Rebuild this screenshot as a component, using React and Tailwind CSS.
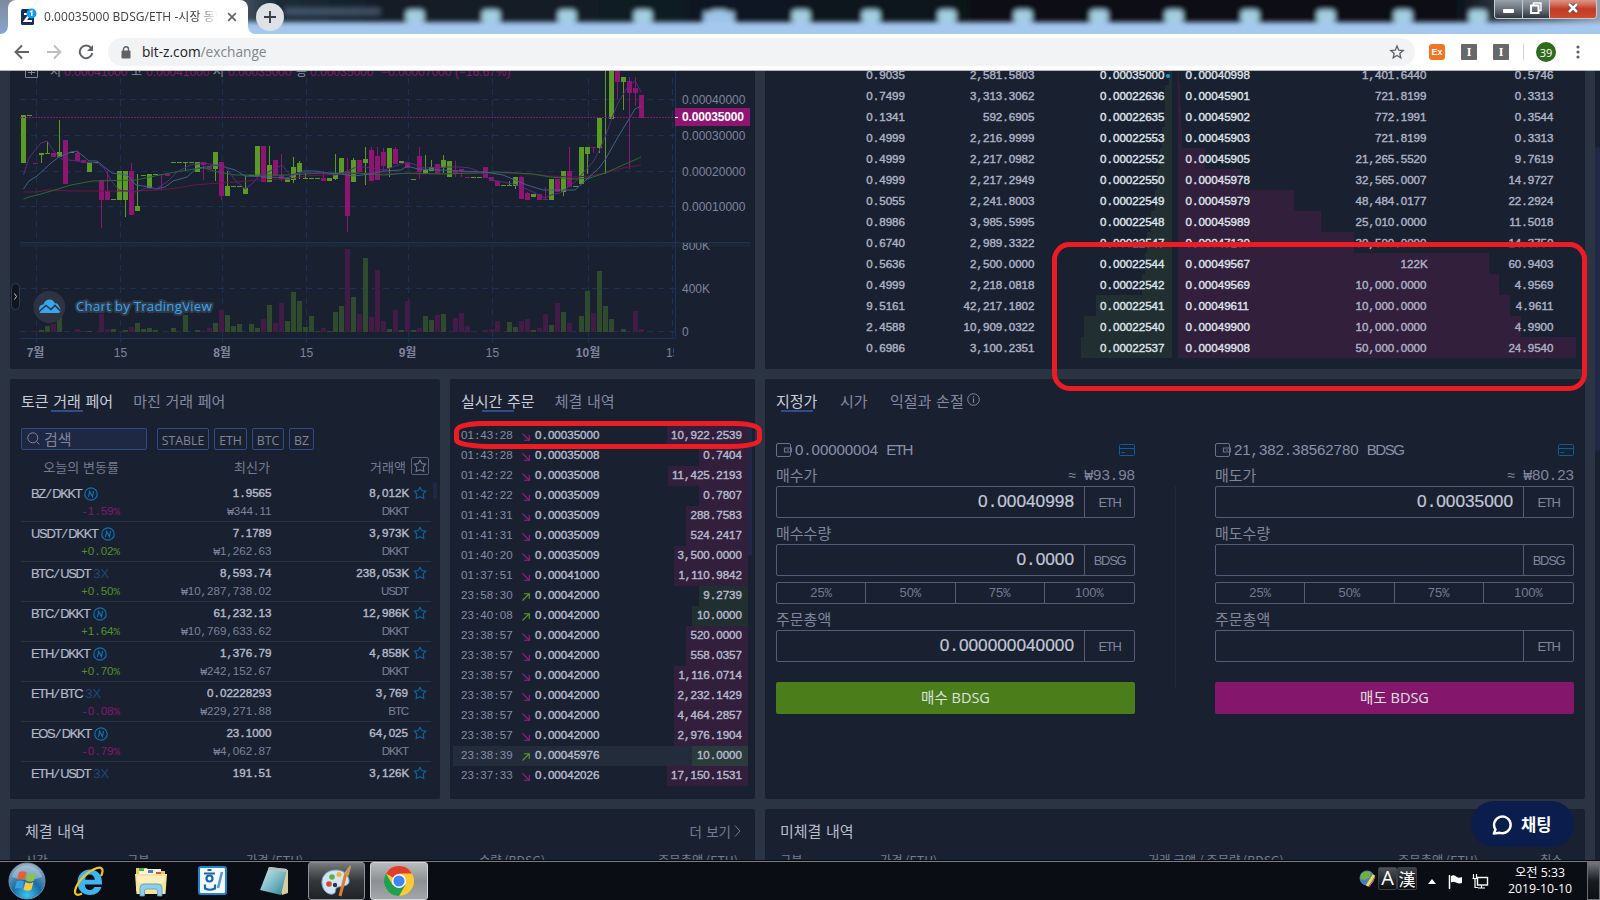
import React from "react";

/* ---------- data ---------- */

// [direction, body top, body bottom, wick top, wick bottom]
const candles = [
  ["g",115,163],["g",115,116],["p",163,164],["g",153,155,153,163],["g",153,154,141,154],["p",153,157],["g",152,157,120,157],["p",140,184],
  ["g",152,153],["p",153,161,151,161],["p",160,163],["g",162,172],["g",162,163],["p",180,200,180,228],["p",191,200,171,200],["g",199,200],
  ["g",171,200],["g",171,200,171,217],["p",171,215,163,215],["g",206,211,174,211],["g",175,176],["g",174,188,174,189],["g",174,175],["p",174,175,174,190],
  ["p",174,176],["g",162,163],["g",162,163],["g",162,163,162,171],["g",162,163],["g",162,172],["p",162,165,162,180],["p",167,169],
  ["g",152,169,152,181],["p",162,196,162,200],["g",186,196,171,196],["g",186,187],["g",186,187],["g",188,194,176,194],["g",175,176],["g",146,176],
  ["p",146,182],["g",165,182,146,182],["p",160,176],["p",175,179,154,181],["g",178,182],["g",167,180,157,183],["g",163,172,161,179],["g",178,179,173,179],
  ["g",178,179],["g",178,179],["p",178,181,171,181],["g",178,181],["g",173,179,154,180],["g",158,174],["p",171,216,158,232],["g",160,182,158,182],
  ["p",160,172],["g",159,163,147,185],["p",150,181,147,181],["p",156,180,147,180],["p",152,166,148,171],["g",148,168,148,177],["p",149,164,147,164],["g",161,163],
  ["p",163,168],["g",179,180],["p",156,172,147,179],["g",170,174,155,174],["g",167,171,160,171],["p",164,174],["g",160,168,155,174],["g",161,177],
  ["p",170,173,161,177],["p",169,172,169,177],["p",177,178],["g",177,178],["g",177,178],["p",167,178],["p",177,181],["p",181,186],
  ["g",185,186],["g",185,186,181,186],["g",177,186,177,189],["p",177,199,176,199],["p",193,200,192,200],["g",194,197],["p",194,200],["p",199,200,187,200],
  ["g",179,200],["p",179,192],["g",171,192,171,196],["p",171,187,147,187],["g",186,187],["g",147,184],["g",147,154,147,174],["p",147,148,147,153],
  ["g",118,148,118,153],["g",40,60,40,174],["g",60,119],["p",60,82,60,99],["g",77,82,77,110],["p",81,93,77,169],["p",88,93,77,106],["p",95,118],
];

const volumes = {
  2:1,3:2,4:6,5:8,6:15,9:3,10:1,11:1,13:18,14:3,15:3,17:2,18:5,19:9,20:3,21:4,22:2,25:4,27:17,29:2,30:1,31:4,32:9,33:22,34:17,35:6,36:8,
  38:8,39:4,40:13,41:27,42:9,43:29,44:11,45:40,46:31,47:5,48:16,49:1,50:4,51:1,52:20,53:26,54:83,55:35,56:18,57:74,58:15,59:62,60:11,61:3,
  62:22,63:2,64:31,65:2,66:4,67:16,68:12,69:17,70:18,72:14,73:19,74:6,77:2,78:3,79:11,81:10,82:5,83:11,84:13,85:2,86:4,87:18,88:7,89:29,
  90:20,91:9,93:16,94:41,95:19,96:61,97:26,98:13,99:1,100:3,102:21,103:3,
};

const averages = [
  ["#6b1748", "23.5,192 37,192 47,190 71,191 132,191 160,190 177,188 194,185 218,183 235,182 257,180 289,179 306,176 340,174 381,173 421,174 470,173 503,173 530,174 550,176 575,177 590,176 605,173 623,168 641,165"],
  ["#2b6a36", "23.5,199 29,197 41,194 58,189 71,185 92,181 136,180 150,177 170,173 194,169 204,168 218,172 235,175 289,175 323,173 357,173 384,175 408,173 442,174 476,173 497,172 517,173 533,174 550,177 575,179 590,178 605,173 623,165 637,159 641,157"],
  ["#3f618a", "23.5,189 29,181 37,176 51,163 59,157 71,152 77,151 89,161 97,161 112,173 127,175 136,185 150,187 156,189 165,187 173,181 187,177 197,168 206,167 218,165 235,170 245,176 268,177 287,178 303,171 316,171 326,173 340,174 354,176 370,174 384,171 401,170 407,166 418,169 442,170 459,171 485,172 503,175 515,180 527,185 543,190 560,190 575,190 587,179 599,168 605,160 618,137 629,119 635,109 641,106"],
  ["#582b80", "23.5,175 29,158 41,143 47,141 53,150 61,159 85,162 97,163 104,168 112,182 119,190 137,192 146,188 156,189 167,182 177,172 190,165 204,163 215,165 226,167 235,180 245,189 253,183 258,177 268,172 282,165 290,175 299,173 313,172 323,173 335,175 343,173 354,168 365,167 384,170 407,162 425,168 449,167 461,167 470,168 480,172 491,180 503,182 513,184 520,186 533,192 545,198 551,195 560,193 575,182 583,173 593,162 600,149 605,137 612,118 618,103 629,85 635,81 641,92"],
];

const book = [
  ["0.9035","2,581.5803","0.00035000",1169,"0.00040998","1,401.6440","0.5746",1179],
  ["0.7499","3,313.3062","0.00022636",1165,"0.00045901","721.8199","0.3313",1180],
  ["0.1341","592.6905","0.00022635",1165,"0.00045902","772.1991","0.3544",1181],
  ["0.4999","2,216.9999","0.00022553",1162,"0.00045903","721.8199","0.3313",1182],
  ["0.4999","2,217.0982","0.00022552",1160,"0.00045905","21,265.5520","9.7619",1205],
  ["0.4999","2,217.2949","0.00022550",1157,"0.00045978","32,565.0007","14.9727",1241],
  ["0.5055","2,241.8003","0.00022549",1155,"0.00045979","48,484.0177","22.2924",1294],
  ["0.8986","3,985.5995","0.00022548",1151,"0.00045989","25,010.0000","11.5018",1321],
  ["0.6740","2,989.3322","0.00022547",1147,"0.00047130","30,500.0000","14.3750",1354],
  ["0.5636","2,500.0000","0.00022544",1145,"0.00049567","122K","60.9403",1489],
  ["0.4999","2,218.0818","0.00022542",1142,"0.00049569","10,000.0000","4.9569",1499],
  ["9.5161","42,217.1802","0.00022541",1096,"0.00049611","10,000.0000","4.9611",1510],
  ["2.4588","10,909.0322","0.00022540",1084,"0.00049900","10,000.0000","4.9900",1521],
  ["0.6986","3,100.2351","0.00022537",1081,"0.00049908","50,000.0000","24.9540",1576],
];

const pairs = [
  ["BZ/DKKT","N","-1.59%","1.9565","₩344.11","8,012K","DKKT"],
  ["USDT/DKKT","N","+0.02%","7.1789","₩1,262.63","3,973K","DKKT"],
  ["BTC/USDT","3X","+0.50%","8,593.74","₩10,287,738.02","238,053K","USDT"],
  ["BTC/DKKT","N","+1.64%","61,232.13","₩10,769,633.62","12,986K","DKKT"],
  ["ETH/DKKT","N","+0.70%","1,376.79","₩242,152.67","4,858K","DKKT"],
  ["ETH/BTC","3X","-0.08%","0.02228293","₩229,271.88","3,769","BTC"],
  ["EOS/DKKT","N","-0.79%","23.1000","₩4,062.87","64,025","DKKT"],
  ["ETH/USDT","3X","","191.51","","3,126K",""],
];

const trades = [
  ["01:43:28",0,"0.00035000","10,922.2539"],
  ["01:43:28",0,"0.00035008","0.7404"],
  ["01:42:22",0,"0.00035008","11,425.2193"],
  ["01:42:22",0,"0.00035009","0.7807"],
  ["01:41:31",0,"0.00035009","288.7583"],
  ["01:41:31",0,"0.00035009","524.2417"],
  ["01:40:20",0,"0.00035009","3,500.0000"],
  ["01:37:51",0,"0.00041000","1,110.9842"],
  ["23:58:30",1,"0.00042000","9.2739"],
  ["23:40:08",1,"0.00042000","10.0000"],
  ["23:38:57",0,"0.00042000","520.0000"],
  ["23:38:57",0,"0.00042000","558.0357"],
  ["23:38:57",0,"0.00042000","1,116.0714"],
  ["23:38:57",0,"0.00042000","2,232.1429"],
  ["23:38:57",0,"0.00042000","4,464.2857"],
  ["23:38:57",0,"0.00042000","2,976.1904"],
  ["23:38:39",1,"0.00045976","10.0000"],
  ["23:37:33",0,"0.00042026","17,150.1531"],
];

const MONO = "font-['Liberation_Mono','Noto_Sans_CJK_KR',monospace]";
const UI = "font-['Noto_Sans_CJK_KR',sans-serif]";
const NUM = "font-['Liberation_Mono','Noto_Sans_CJK_KR',monospace] text-[10.75px] [-webkit-text-stroke:0.4px_currentColor]";

// Digits and capitals in the sans face, sized and tracked so that each fills one monospace cell.
function Fig({ children }) {
  return String(children).split(/(\d+|[A-Z]+)/).map((part, i) => {
    if (i % 2 === 0) return part;
    return /\d/.test(part)
      ? <span key={i} className="font-['Liberation_Sans',sans-serif] text-[1.079em]">{part}</span>
      : <span key={i} className="font-['Liberation_Sans',sans-serif] text-[1.079em] tracking-[-0.1em]">{part}</span>;
  });
}

/* ---------- browser chrome ---------- */

function TabStrip() {
  const glows = [415, 491, 567, 643, 719, 801, 871, 947, 1023, 1099, 1174, 1250, 1326, 1403, 1478];
  return (
    <div className="relative flex h-[34px] w-full shrink-0 overflow-hidden bg-[#a5c8ef]">
      <svg className="absolute inset-0" width="1600" height="34">
        <defs>
          <filter id="soft" x="-20%" y="-40%" width="140%" height="200%"><feGaussianBlur stdDeviation="2.6" /></filter>
          <linearGradient id="glass" x1="0" x2="1" y1="0" y2="0">
            <stop offset="0" stopColor="#8295a6" /><stop offset="0.15" stopColor="#566473" /><stop offset="0.18" stopColor="#1f2c39" /><stop offset="0.25" stopColor="#131c26" />
            <stop offset="0.42" stopColor="#111a24" /><stop offset="0.7" stopColor="#080d13" /><stop offset="0.9" stopColor="#0b1118" />
            <stop offset="0.96" stopColor="#5c6672" /><stop offset="1" stopColor="#a7b6c8" />
          </linearGradient>
          <linearGradient id="edge" x1="0" x2="0" y1="0" y2="1"><stop offset="0" stopColor="#7e8a9a" /><stop offset="1" stopColor="#87a5d0" /></linearGradient>
        </defs>
        <g filter="url(#soft)">
          <rect x="-20" y="-20" width="1640" height="42" fill="url(#glass)" />
          {glows.map((x) => <rect key={x} x={x - 9} y="10" width="18" height="12" rx="4" fill="#a3cfe0" />)}
          <rect x="285" y="8" width="95" height="7" fill="#5a7188" opacity="0.6" />
          <rect x="704" y="12" width="30" height="10" fill="#9cc3e8" />
        </g>
        <rect width="9" height="34" fill="url(#edge)" />
        <path d="M0 34C5 34 8 31 8 25V34ZM256 34C251 34 248 31 248 25V34Z" fill="#fff" />
      </svg>
      <div className="relative ml-2 flex h-full w-[240px] items-center rounded-t-lg bg-white pl-[13px]">
        <svg width="16" height="18" viewBox="0 0 16 18">
          <rect y="1" width="13" height="16" rx="1.5" fill="#1a2c5b" />
          <path d="M3 6H9L4 13H11" fill="none" stroke="#fff" strokeWidth="2.2" />
          <circle cx="10.5" cy="5.5" r="5" fill="#129bf0" />
          <path d="M9 4L10.8 3V8" fill="none" stroke="#fff" strokeWidth="1.4" />
        </svg>
        <div className="ml-[7px] w-[174px] overflow-hidden whitespace-pre font-['Open_Sans','Noto_Sans_CJK_KR',sans-serif] text-[12px] leading-[20px] tracking-[0.05px] text-[#3c4043] [mask-image:linear-gradient(to_right,#000_88%,transparent)]">0.00035000 BDSG/ETH -시장 동향</div>
        <svg className="ml-[9px]" width="10" height="10" viewBox="0 0 10 10"><path d="M1.2 1.2L8.8 8.8M8.8 1.2L1.2 8.8" stroke="#5f6368" strokeWidth="1.7" /></svg>
      </div>
      <div className="relative ml-2 mt-[3px] flex size-7 items-center justify-center rounded-full bg-[#dee1e6]">
        <svg width="12" height="12" viewBox="0 0 12 12"><path d="M6 0V12M0 6H12" stroke="#3c4043" strokeWidth="1.9" /></svg>
      </div>
      <div className="absolute right-[3px] top-0 flex h-[19px] overflow-hidden rounded-b-[4px] border border-t-0 border-[#c5ccd4]">
        <div className="flex w-[28px] items-end justify-center border-r border-[#c5ccd4] bg-linear-to-b from-[#98a0aa] via-[#6a727c] via-50% to-[#2f363e] pb-[5px]"><span className="h-[4px] w-[11px] rounded-[1px] bg-white" /></div>
        <div className="flex w-[27px] items-center justify-center border-r border-[#c5ccd4] bg-linear-to-b from-[#98a0aa] via-[#6a727c] via-50% to-[#2f363e]">
          <svg className="mb-[2px]" width="12" height="12" viewBox="0 0 12 12"><path d="M3.5 3V1H11V8.5H9" fill="none" stroke="#fff" strokeWidth="1.4" /><rect x="1" y="3.5" width="7.5" height="7.5" fill="none" stroke="#fff" strokeWidth="2" /></svg>
        </div>
        <div className="flex w-[46px] items-center justify-center bg-linear-to-b from-[#dd9688] via-[#c03a26] via-50% to-[#d04a2c]">
          <svg className="mb-[2px]" width="12" height="10" viewBox="0 0 12 10"><path d="M2 1L10 9M10 1L2 9" stroke="#4a3a40" strokeWidth="4" /><path d="M2 1L10 9M10 1L2 9" stroke="#fff" strokeWidth="2.6" /></svg>
        </div>
      </div>
    </div>
  );
}

function Toolbar() {
  return (
    <div className="flex h-[37px] shrink-0 items-center border-b border-[#b4b7b8] bg-white">
      <svg className="ml-[14px]" width="16" height="16" viewBox="0 0 16 16"><path d="M15 8H2M8 1.5L1.5 8L8 14.5" fill="none" stroke="#5f6368" strokeWidth="1.9" /></svg>
      <svg className="ml-[16px]" width="16" height="16" viewBox="0 0 16 16"><path d="M1 8H14M8 1.5L14.5 8L8 14.5" fill="none" stroke="#bcbec1" strokeWidth="1.9" /></svg>
      <svg className="ml-[16px]" width="16" height="16" viewBox="0 0 16 16"><path d="M13.2 4.2A6.3 6.3 0 1 0 14.3 9" fill="none" stroke="#5f6368" strokeWidth="2" /><path d="M15 1V7H9Z" fill="#5f6368" /></svg>
      <div className="ml-[14px] flex h-7 w-[1307px] items-center rounded-full bg-[#f1f3f4] pl-[13px] pr-[10px]">
        <svg width="10" height="13" viewBox="0 0 10 13"><rect x="0.5" y="4.5" width="9" height="8" rx="1" fill="#5f6368" /><path d="M2.5 5V3.3a2.5 2.5 0 0 1 5 0V5" fill="none" stroke="#5f6368" strokeWidth="1.4" /></svg>
        <span className="ml-[11px] font-['Open_Sans',sans-serif] text-[13.7px] leading-[20px] text-[#80868b]"><span className="text-[#202124]">bit-z.com</span>/exchange</span>
        <svg className="ml-auto" width="16" height="16" viewBox="0 0 24 24"><path d="M12 3l2.6 6.2 6.7.6-5.1 4.4 1.5 6.5L12 17.3l-5.7 3.4 1.5-6.5-5.1-4.4 6.7-.6z" fill="none" stroke="#5f6368" strokeWidth="2" /></svg>
      </div>
      <div className="ml-[14px] flex size-4 items-center justify-center rounded-[3px] bg-[#f47421] font-['Liberation_Sans',sans-serif] text-[9px] font-bold leading-none text-white">Ex</div>
      <div className="ml-[16px] flex size-4 items-center justify-center rounded-[1px] bg-[#686868] font-['Liberation_Serif',serif] text-[12px] font-bold leading-none text-white">I</div>
      <div className="ml-[16px] flex size-4 items-center justify-center rounded-[1px] bg-[#686868] font-['Liberation_Serif',serif] text-[12px] font-bold leading-none text-white">I</div>
      <div className="ml-[14px] h-4 w-px bg-[#cfd1d4]" />
      <div className="ml-[12px] flex size-5 items-center justify-center rounded-full bg-[#2e6b1c] font-['Open_Sans',sans-serif] text-[11px] leading-none text-white">39</div>
      <svg className="ml-[20px]" width="4" height="14" viewBox="0 0 4 14"><circle cx="2" cy="2" r="1.6" fill="#5f6368" /><circle cx="2" cy="7" r="1.6" fill="#5f6368" /><circle cx="2" cy="12" r="1.6" fill="#5f6368" /></svg>
    </div>
  );
}

/* ---------- price chart ---------- */

function Chart() {
  const color = { g: "#5b9a26", p: "#8f1572" };
  const label = { fontFamily: "'Liberation Sans','Noto Sans CJK KR',sans-serif", fontSize: 12, fill: "#80839e" };
  const legend = [[50, "시", "#8a8ea8"], [64, "0.00041000", "#8f1572"], [131, "고", "#8a8ea8"], [146, "0.00041000", "#8f1572"], [213, "저", "#8a8ea8"], [228, "0.00035000", "#8f1572"], [296, "종", "#8a8ea8"], [310, "0.00035000", "#8f1572"], [381, "−0.00007000 (−16.67%)", "#8f1572"]];
  return (
    <svg width="745" height="298" viewBox="10 71 745 298" className="block rounded-b-[2px] bg-[#192130]">
      <defs><clipPath id="plot"><rect x="20" y="71" width="654.5" height="267" /></clipPath></defs>
      {[99.5, 135.5, 171.5, 206.5, 245.5, 288.5, 331.5].map((y) => <path key={y} d={`M20 ${y}H679`} stroke="#1c3054" strokeDasharray="6 5" />)}
      {[36.5, 120.5, 222.5, 306.5, 408.5, 492.5, 588.5, 672.5].map((x) => <path key={x} d={`M${x} 78V338`} stroke="#1c3054" strokeDasharray="6 5" />)}
      <rect x="20" y="243" width="730" height="4" fill="#1c2a36" opacity="0.8" />
      <path d="M20 242.5H750M20 338.5H675.5M675.5 71V338" stroke="#1c3358" fill="none" />
      {[36.5, 120.5, 222.5, 306.5, 408.5, 492.5, 588.5].map((x) => <path key={x} d={`M${x} 338V342`} stroke="#1c3358" />)}
      <g clipPath="url(#plot)">
        {Object.entries(volumes).map(([i, h]) => <rect key={i} x={21 + 6 * i} y={332 - h} width="5" height={h} fill={candles[i][0] === "g" ? "#2f4a2c" : "#421c47"} />)}
        {candles.map(([c, t, b, wt, wb], i) => (
          <g key={i} fill={color[c]} shapeRendering="crispEdges">
            <rect x={21 + 6 * i} y={t} width="5" height={b - t} />
            {wb && <rect x={23 + 6 * i} y={wt} width="1" height={wb - wt} />}
          </g>
        ))}
        {averages.map(([c, pts]) => <polyline key={c} points={pts} fill="none" stroke={c} strokeWidth="1" />)}
      </g>
      <path d="M20 117.5H675" stroke="#8f1572" strokeDasharray="2 1" />
      <rect x="675" y="108" width="75" height="18" fill="#8f1572" />
      <path d="M675 117.5H678" stroke="#fff" />
      <text x="682" y="121" {...label} fontWeight="bold" fill="#fff" fontSize="12" textLength="62">0.00035000</text>
      <text x="682" y="104" {...label}>0.00040000</text>
      <text x="682" y="140" {...label}>0.00030000</text>
      <text x="682" y="176" {...label}>0.00020000</text>
      <text x="682" y="211" {...label}>0.00010000</text>
      <svg x="676" y="243" width="74" height="12" viewBox="676 243 74 12"><text x="682" y="250" {...label}>800K</text></svg>
      <text x="682" y="293" {...label}>400K</text>
      <text x="682" y="336" {...label}>0</text>
      {[[35.5, "7월"], [222, "8월"], [407.5, "9월"], [588, "10월"]].map(([x, t]) => <text key={t} x={x} y="357" textAnchor="middle" {...label} fontWeight="bold">{t}</text>)}
      {[120.5, 306.5, 492.5].map((x) => <text key={x} x={x} y="357" textAnchor="middle" {...label}>15</text>)}
      <svg x="660" y="343" width="14" height="20" viewBox="660 343 14 20"><text x="666" y="357" {...label}>15</text></svg>
      {legend.map(([x, t, f]) => <text key={x} x={x} y="76" {...label} fontSize={12} fill={f}>{t}</text>)}
      <path d="M25.5 66V77.5H37.5V66M28 72.5H35M31.5 68V75" stroke="#80839e" fill="none" />
      <circle cx="49.3" cy="307" r="16" fill="#2f3241" />
      <path d="M39 309C39 306 41 304.5 43.5 304.5C44.5 301 47 299.5 49.5 299.5C52 299.5 54 301 54.8 303.3C57.5 303 58.5 304.5 59 306.5C60 307.5 60.8 309 60.5 311C60.3 312.3 59.5 313 58 313H41C39.5 313 38.5 311.5 39 309Z" fill="#37a6ef" />
      <path d="M38.5 312L46 305.5L51 309.5L55 305.5L60.5 311" fill="none" stroke="#2f3241" strokeWidth="1.6" />
      <text x="76" y="311" fontFamily="'Open Sans',sans-serif" fontSize="13.5" textLength="136" fill="#37a6ef" stroke="#2f3b4b" strokeWidth="4" strokeLinejoin="round" paintOrder="stroke">Chart by TradingView</text>
      <rect x="11.5" y="283.5" width="8" height="26" rx="4" fill="#11151d" stroke="#343a48" />
      <path d="M14.5 293.5L16.5 296.5L14.5 299.5" stroke="#c5c9d2" fill="none" />
    </svg>
  );
}

/* ---------- order book ---------- */

function OrderBook() {
  return (
    <section className="flex h-[298px] w-[820px] flex-col justify-end overflow-hidden rounded-b-[2px] bg-[#192130] pb-[11px]">
      {book.map(([total, amount, bid, bidX, ask, askAmount, askTotal, askX], i) => (
        <div key={i} className={`relative flex h-[21px] shrink-0 items-center pt-[2px] leading-[19px] text-[#adb2c4] ${NUM}`}>
          <div className="absolute inset-y-0 bg-[#212f30]" style={{ left: bidX - 765, width: 1172 - bidX }} />
          <div className="absolute inset-y-0 bg-[#311f3b]" style={{ left: 413, width: askX - 1178 }} />
          <span className="relative w-[140px] text-right"><Fig>{total}</Fig></span>
          <span className="relative w-[129.5px] text-right"><Fig>{amount}</Fig></span>
          <span className="relative w-[130px] text-right text-[#dfe2ea]"><Fig>{bid}</Fig></span>
          <span className="relative flex w-[21px] pl-[1.5px]">{i === 0 && <i className="size-1 rounded-full bg-[#1b96f0]" />}</span>
          <span className="relative w-[110px] text-[#dfe2ea]"><Fig>{ask}</Fig></span>
          <span className="relative w-[131px] text-right"><Fig>{askAmount}</Fig></span>
          <span className="relative w-[127px] text-right"><Fig>{askTotal}</Fig></span>
        </div>
      ))}
    </section>
  );
}

/* ---------- pairs ---------- */

function Star({ color = "#0f65a3" }) {
  return <svg width="14" height="14" viewBox="0 0 14 14"><path d="M7 1.2L8.8 4.6L12.7 5.2L10.3 8L10.8 12.3L7 10.8L3.2 12.3L3.7 8L1.3 5.2L5.2 4.6Z" fill="none" stroke={color} strokeWidth="1.1" /></svg>;
}

function NewBadge() {
  return <svg className="ml-[3px]" width="14" height="14" viewBox="0 0 14 14" fill="none" stroke="#0f70b5"><circle cx="7" cy="7" r="6.2" strokeWidth="1.2" /><path d="M4.5 10L5.7 4.3L8.4 9.7L9.6 4" strokeWidth="1.2" /></svg>;
}

function Tabs({ items, line, gap }) {
  return (
    <div className={`relative flex h-[23px] items-center whitespace-nowrap text-[15px] leading-[23px] text-[#8388a0] [word-spacing:1.3px] ${UI}`}>
      <span className="text-[#c9cddb]">{items[0]}</span>
      {items.slice(1).map((t) => <span key={t} style={{ marginLeft: gap }}>{t}</span>)}
      {items.length === 3 && <svg className="mb-[2px] ml-[3px]" width="13" height="13" viewBox="0 0 13 13" fill="none" stroke="#8388a0"><circle cx="6.5" cy="6.5" r="5.8" /><path d="M6.5 5.5V9.8M6.5 3.2V4.4" strokeWidth="1.2" /></svg>}
      <i className="absolute bottom-0 h-[2px] w-[32px] bg-[#334a8c]" style={{ left: line }} />
    </div>
  );
}

function Pairs() {
  return (
    <section className="flex h-[420px] w-[430px] flex-col overflow-hidden rounded-[2px] bg-[#192130] pl-[11px] pt-[10px]">
      <Tabs items={["토큰 거래 페어", "마진 거래 페어"]} line={30} gap={20} />
      <div className="mt-[16px] flex h-[22px] text-[#80859c]">
        <div className={`mr-[10px] flex w-[126px] items-center rounded-[2px] border border-[#304a8a] bg-[#1e2843] pb-[1px] pl-[5px] text-[15px] leading-[20px] ${UI}`}>
          <svg className="mr-[4px]" width="13" height="13" viewBox="0 0 13 13" fill="none" stroke="#80859c"><circle cx="5.8" cy="5.8" r="5" /><path d="M9.5 9.5L12.5 12.5" /></svg>검색
        </div>
        {[["STABLE", "w-[52px]"], ["ETH", "w-[33px]"], ["BTC", "w-[32px]"], ["BZ", "w-[25px]"]].map(([t, w]) => (
          <div key={t} className={`mr-[5px] flex items-center justify-center rounded-[2px] border border-[#304a8a] pt-[3px] font-['Open_Sans',sans-serif] text-[12.3px] leading-[18px] ${w}`}>{t}</div>
        ))}
      </div>
      <div className={`mt-[7px] flex h-[18px] items-center text-[13px] leading-[18px] text-[#757b92] ${UI}`}>
        <span className="mt-[1px] w-[98px] text-right [word-spacing:1px]">오늘의 변동률</span>
        <span className="mt-[1px] w-[151px] text-right">최신가</span>
        <span className="mt-[1px] w-[136px] text-right">거래액</span>
        <span className="ml-[5px] flex size-[18px] items-center justify-center rounded-[2px] border border-[#5b6079]"><Star color="#757b92" /></span>
      </div>
      <div className="mt-[7px] flex">
        <div className="w-[410px]">
          {pairs.map(([name, tag, pct, price, krw, vol, unit], i) => (
            <div key={name} className={`flex h-[40px] flex-col ${NUM} ${i < 7 ? "border-b border-[#2b3443]" : ""}`}>
              <div className="flex h-[23px] items-center text-[#b3b8c9]">
                <div className="flex w-[150px] items-center pl-[10px] pt-[1px] text-[12px] [-webkit-text-stroke:0.2px_currentColor]"><span><Fig>{name}</Fig></span>{tag === "N" ? <NewBadge /> : <span className="ml-[3px] text-[#1d4877] [-webkit-text-stroke:0px]"><Fig>3X</Fig></span>}</div>
                <span className="w-[100.5px] text-right"><Fig>{price}</Fig></span>
                <span className="w-[136.5px] text-right"><Fig>{vol}</Fig></span>
                <span className="mb-[1px] ml-[5px]"><Star /></span>
              </div>
              <div className="flex h-[13px] items-center text-[#7c829b] [-webkit-text-stroke:0px]">
                <span className={`w-[99px] text-right ${pct[0] === "-" ? "text-[#84176c]" : "text-[#578f27]"}`}><Fig>{pct}</Fig></span>
                <span className="w-[151.5px] text-right"><Fig>{krw}</Fig></span>
                <span className="w-[136.5px] text-right"><Fig>{unit}</Fig></span>
              </div>
            </div>
          ))}
        </div>
        <i className="ml-[2px] h-[17px] w-[4px] rounded-full bg-[#202845]" />
      </div>
    </section>
  );
}

/* ---------- trades ---------- */

function Trades() {
  return (
    <section className="flex h-[420px] w-[305px] flex-col overflow-hidden rounded-[2px] bg-[#192130] pt-[10px]">
      <div className="pl-[11px]"><Tabs items={["실시간 주문", "체결 내역"]} line={21} gap={20} /></div>
      <div className="mt-[14px] flex">
        <div className="ml-[3px] w-[295px]">
          {trades.map(([time, up, price, amount], i) => (
            <div key={i} className={`flex h-[20px] items-center pl-[8px] leading-[18px] text-[#b5bacb] ${NUM} ${i === 16 ? "bg-[#232c3b]" : ""}`}>
              <span className="mb-[2px] w-[61px] text-[#868ca5] [-webkit-text-stroke:0px]"><Fig>{time}</Fig></span>
              <svg className="mr-[5px] mt-[1px]" width="8" height="8" viewBox="0 0 8 8" fill="none" stroke={up ? "#5b9a26" : "#9b1a80"}>
                <path d={up ? "M0.5 7.5L7 1M2 0.7H7.3V6" : "M0.5 0.5L7 7M2 7.3H7.3V2"} strokeWidth="1.1" />
              </svg>
              <span className="mb-[2px]"><Fig>{price}</Fig></span>
              <span className={`ml-auto flex h-[20px] items-center pb-[2px] pr-[6px] ${amount === "10.0000" ? "pl-[5px]" : "pl-[4px]"} ${up ? (i === 16 ? "bg-[#2b3a3b]" : "bg-[#212f30]") : "bg-[#311f3b]"}`}><span><Fig>{amount}</Fig></span></span>
            </div>
          ))}
        </div>
        <i className="h-[130px] w-[4px] rounded-b-full bg-[#202845]" />
      </div>
    </section>
  );
}

/* ---------- order form ---------- */

function Field({ label, note, value, unit }) {
  return (
    <div className="flex flex-col">
      <div className="flex h-[22px] items-center justify-between pt-[1px] text-[14px] text-[#80859c]">
        <span className={`text-[15px] ${UI}`}>{label}</span>
        {note && <span className={MONO}><Fig>{note}</Fig></span>}
      </div>
      <div className={`flex h-[32px] rounded-[2px] border border-[#565b76] ${MONO}`}>
        <span className="flex-1 pr-[10px] text-right text-[16px] leading-[28px] text-[#c3c7d6] [-webkit-text-stroke:0.2px_currentColor]"><Fig>{value}</Fig></span>
        <span className="w-[50px] border-l border-[#565b76] text-center text-[12px] leading-[32px] text-[#80859c]"><Fig>{unit}</Fig></span>
      </div>
    </div>
  );
}

function OrderForm({ balance, labels, note, values, action, buy }) {
  return (
    <div className="flex w-[359px] flex-col">
      <div className={`flex h-[20px] items-center text-[14px] tracking-[-0.1px] text-[#8a90a8] ${MONO}`}>
        <svg className="mr-[3px]" width="16" height="14" viewBox="0 0 16 14" fill="none" stroke="#6c718a"><rect x="0.5" y="0.5" width="14" height="13" rx="1.5" /><path d="M15.5 5H8.5V9H15.5ZM11 7H13" strokeWidth="1.2" /></svg>
        <span className="flex-1"><Fig>{balance}</Fig></span>
        <svg width="16" height="12" viewBox="0 0 16 12" fill="none" stroke="#0f5c96"><rect x="0.5" y="0.5" width="15" height="11" rx="1" /><path d="M0.5 4.5H15.5M2.5 8.5H6" /></svg>
      </div>
      <div className="mt-[4px]"><Field label={labels[0]} note={note} value={values[0]} unit="ETH" /></div>
      <div className="mt-[4px]"><Field label={labels[1]} value={values[1]} unit="BDSG" /></div>
      <div className={`mt-[6px] grid h-[22px] grid-cols-4 divide-x divide-[#565b76] rounded-[2px] border border-[#565b76] text-center text-[12px] leading-[20px] text-[#757a92] ${MONO}`}>
        {["25%", "50%", "75%", "100%"].map((t) => <span key={t}><Fig>{t}</Fig></span>)}
      </div>
      <div className="mt-[4px]"><Field label="주문총액" value={values[2]} unit="ETH" /></div>
      <div className={`mt-[20px] h-[32px] rounded-[2px] text-center font-['Open_Sans','Noto_Sans_CJK_KR',sans-serif] text-[14.5px] leading-[31px] text-[#dde3e0] ${buy ? "bg-[#4b7e1a]" : "bg-[#84176b]"}`}>{action}</div>
    </div>
  );
}

function OrderPanel() {
  return (
    <section className="flex h-[420px] w-[820px] flex-col rounded-[2px] bg-[#192130] pl-[11px] pt-[10px]">
      <Tabs items={["지정가", "시가", "익절과 손절"]} line={5} gap={22.5} />
      <div className="mt-[28px] flex">
        <OrderForm buy balance="0.00000004 ETH" labels={["매수가", "매수수량"]} note="≈ ₩93.98" values={["0.00040998", "0.0000", "0.000000040000"]} action="매수 BDSG" />
        <i className="ml-[40px] mr-[39px] mt-[46px] h-[202px] w-px bg-[#202a3a]" />
        <OrderForm balance="21,382.38562780 BDSG" labels={["매도가", "매도수량"]} note="≈ ₩80.23" values={["0.00035000", "", ""]} action="매도 BDSG" />
      </div>
    </section>
  );
}

/* ---------- history panels ---------- */

function History({ title, cols, more, width }) {
  return (
    <section className={`flex h-[60px] shrink-0 flex-col rounded-t-[2px] bg-[#192130] pl-[15px] pt-[11px] ${UI} ${width}`}>
      <div className="flex h-[22px] items-center justify-between pr-[14px] text-[15px] leading-[22px] text-[#b9bdcc] [word-spacing:1.3px]">
        {title}
        {more && <span className="flex items-center text-[13.5px] text-[#757b92]">{more}<svg className="ml-[3px]" width="7" height="12" viewBox="0 0 7 12" fill="none" stroke="#757b92"><path d="M1 0.5L6 6L1 11.5" /></svg></span>}
      </div>
      <div className="mt-[8px] flex h-[20px] items-center whitespace-nowrap text-[12.3px] leading-[20px] text-[#757b92]">
        {cols.map(([t, w], i) => <span key={i} style={{ width: w }}>{t}</span>)}
      </div>
    </section>
  );
}

/* ---------- taskbar ---------- */

function Taskbar() {
  return (
    <div className="relative z-10 flex h-[40px] shrink-0 items-center border-t border-[#05070a] bg-[#0a0d13] shadow-[inset_0_1px_0_#7b7d82]">
      <svg className="ml-[8px] shrink-0" width="38" height="38" viewBox="0 0 38 38">
        <defs><radialGradient id="orb" cx="0.5" cy="0.9" r="0.9"><stop offset="0" stopColor="#37c6f2" /><stop offset="0.45" stopColor="#1a6ba6" /><stop offset="1" stopColor="#9db4c6" /></radialGradient></defs>
        <circle cx="19" cy="19" r="18" fill="url(#orb)" stroke="#6f8fa8" />
        <path d="M4 15A15.5 15.5 0 0 1 34 15Q19 21 4 15Z" fill="#c5d6e4" opacity="0.45" />
        <path d="M11 10.5Q14.5 8 18.5 10.5L16.5 18Q13 15.8 9 18Z" fill="#e8602c" />
        <path d="M20 11Q24 13.5 28 11L26 18.5Q22 21 18 18.5Z" fill="#8cc34a" />
        <path d="M8.5 19.5Q12.5 17.5 16 19.5L14 27Q10.5 25 6.5 27Z" fill="#3aa0e4" />
        <path d="M17.5 20Q21.5 22.5 25.5 20L23.5 27.5Q19.5 30 15.5 27.5Z" fill="#fbc93a" />
      </svg>
      <svg className="ml-[27px] shrink-0" width="32" height="32" viewBox="0 0 32 32">
        <path d="M29 18.5C29.5 10 24.5 4.5 17 4.5C9.5 4.5 4.5 10 4.5 17.5C4.5 25 9.5 30 17 30C22.5 30 27 27 28.5 22H21.5C20.5 24 19 25 17 25C13.8 25 12 22.5 11.8 19.5H29ZM12 14.8C12.5 11.5 14.3 9.5 17 9.5C19.7 9.5 21.5 11.5 21.8 14.8Z" fill="#3fb5f0" fillRule="evenodd" />
        <path d="M28 11C31 5 29.5 1.5 24 3C16 5.5 6.5 14 3 22.5C0.5 29 3 31.5 9 28.5" fill="none" stroke="#f4c61f" strokeWidth="2.2" />
      </svg>
      <svg className="ml-[29px] shrink-0" width="34" height="32" viewBox="0 0 34 32">
        <path d="M2 3H13L15 6H31V26H2Z" fill="#e9ca69" /><path d="M5 4H27V9H5Z" fill="#f7f4dc" />
        <rect x="5" y="3" width="5" height="3" fill="#4bb34b" /><rect x="14" y="5" width="5" height="3" fill="#3c7fd6" /><rect x="22" y="7" width="5" height="3" fill="#d2553c" />
        <path d="M1 9H33L31.5 29H2.5Z" fill="#f7e29c" /><path d="M3 11H31L30 18H4Z" fill="#fbeebd" />
        <path d="M6 31V23Q6 19 10 19H24Q28 19 28 23V31H23.5V26Q23.5 24 21.5 24H12.5Q10.5 24 10.5 26V31Z" fill="#8ecdec" stroke="#4f9fca" strokeWidth="0.8" />
      </svg>
      <div className="relative ml-[30px] flex size-[29px] shrink-0 rounded-[3px] border-2 border-[#1c86d1] bg-[#f4f9fd]">
        <svg width="25" height="25" viewBox="0 0 25 25" fill="none" stroke="#1a67ac" strokeWidth="2.2">
          <path d="M7.5 2H11.5M4 5.5H15" /><circle cx="9.500" cy="10.500" r="3" /><path d="M5 16.500V20.500Q10 23 15 20.500V16.500" /><path d="M22 4L18 20" stroke="#5b98cf" strokeWidth="2.6" />
        </svg>
      </div>
      <svg className="ml-[32px] shrink-0" width="32" height="32" viewBox="0 0 32 32">
        <defs><linearGradient id="pad" x1="0" y1="0" x2="1" y2="1"><stop offset="0" stopColor="#d4eef3" /><stop offset="0.6" stopColor="#6fb2bf" /><stop offset="1" stopColor="#2f7f8d" /></linearGradient></defs>
        <path d="M12 3L29 5V28L23 30Z" fill="#d8cda0" /><path d="M10 2L28 4L22 30L1 25Z" fill="url(#pad)" /><path d="M10 2L28 4L27 7L9 5Z" fill="#b6bec2" />
      </svg>
      <div className="ml-[17px] flex h-[38px] w-[57px] shrink-0 items-center justify-center rounded-[3px] border border-[#8f9296] bg-linear-to-b from-[#77797c] via-[#33363a] via-50% to-[#202326]">
        <svg width="34" height="34" viewBox="0 0 34 34">
          <path d="M16 6C6 6 1 13 2 20C3 27 8 31 13 30C17 29 14 24 18 23C23 22 30 22 29 16C28 10 23 6 16 6Z" fill="#d3e5f2" stroke="#7da6c4" />
          <circle cx="9" cy="20" r="2.8" fill="#d84338" /><circle cx="12" cy="13" r="2.8" fill="#5bb04b" /><circle cx="19" cy="10.5" r="2.5" fill="#f2b632" /><circle cx="15" cy="21" r="2.2" fill="#25384a" />
          <path d="M20 32L26 9" stroke="#e07a2d" strokeWidth="3" /><path d="M23.5 10L30 1L31 3L28.5 12Z" fill="#c69a63" />
        </svg>
      </div>
      <div className="ml-[5px] flex h-[38px] w-[58px] shrink-0 items-center justify-center rounded-[3px] border border-[#d4d6d8] bg-linear-to-b from-[#b9bbbd] via-[#8d9092] via-50% to-[#a4a7a9]">
        <svg width="30" height="30" viewBox="0 0 30 30">
          <circle cx="15" cy="15" r="15" fill="#fcc934" />
          <path d="M15 15L2 7.5A15 15 0 0 1 28 7.5H15Z" fill="#e03d2f" />
          <path d="M2 7.5A15 15 0 0 0 15 30L21.5 18.8L15 15L8.5 18.7Z" fill="#1fa055" />
          <circle cx="15" cy="15" r="7" fill="#fff" /><circle cx="15" cy="15" r="5.6" fill="#4285f4" />
        </svg>
      </div>
      <div className="ml-auto flex h-full items-center text-white">
        <svg className="mb-[4px] mr-[2px]" width="17" height="18" viewBox="0 0 17 18"><ellipse cx="8" cy="8" rx="7.5" ry="7.5" fill="#3f80bd" /><path d="M2 4Q6 0 12 2L11 7L6 10L1 9Z" fill="#6fae45" /><path d="M15 5L8 16" stroke="#f4d35e" strokeWidth="3" /><path d="M16 7L10 17" stroke="#d46a3b" strokeWidth="1" /></svg>
        <div className="mb-[5px] flex h-[23px] w-[19px] items-center justify-center rounded-[2px] border border-[#3b3e42] bg-linear-to-b from-[#4e5156] to-[#0c0e11] font-['Open_Sans',sans-serif] text-[20px] leading-none">A</div>
        <div className="mb-[5px] flex h-[23px] w-[20px] items-center justify-center rounded-[2px] border border-[#3b3e42] bg-linear-to-b from-[#3e4146] to-[#0c0e11] font-['Noto_Sans_CJK_KR',sans-serif] text-[17px] leading-none">漢</div>
        <svg className="ml-[11px] mt-[2px]" width="8" height="5" viewBox="0 0 8 5"><path d="M4 0L8 5H0Z" fill="#fff" /></svg>
        <svg className="ml-[12px] mt-[1px]" width="15" height="15" viewBox="0 0 15 15"><path d="M1.5 1V15" stroke="#fff" strokeWidth="1.5" /><path d="M3 2Q6 0.5 8 2.5T14 3V9Q11 10 8 8.5T3 8.5Z" fill="#fff" /></svg>
        <svg className="ml-[9px] mt-[2px]" width="17" height="15" viewBox="0 0 17 15" fill="none" stroke="#fff"><rect x="5.5" y="3.5" width="10" height="7.5" strokeWidth="1.4" /><path d="M6 14H13M9.5 11V14M1.5 0V4M4.5 0V4M0.5 4.5H5.5M3 5V13.5H6" strokeWidth="1.2" /></svg>
        <div className="ml-[13px] mt-[1px] w-[76px] whitespace-nowrap text-center font-['Open_Sans','Noto_Sans_CJK_KR',sans-serif] text-[12.3px] leading-[16.5px]">오전 5:33<br />2019-10-10</div>
        <div className="ml-[9px] h-[38px] w-[13px] border border-[#6a6d72] bg-linear-to-b from-[#74777c] via-[#181b1f] via-50% to-[#0e1013]" />
      </div>
    </div>
  );
}

/* ---------- page ---------- */

export default function App() {
  return (
    <div className="relative flex h-[900px] w-[1600px] flex-col overflow-hidden bg-[#2b3443]">
      <TabStrip />
      <Toolbar />
      <main className="flex h-[789px] shrink-0 overflow-hidden">
        <div className="flex w-[1595px] flex-col gap-[10px] pl-[10px]">
          <div className="flex gap-[10px]"><Chart /><OrderBook /></div>
          <div className="flex gap-[10px]"><Pairs /><Trades /><OrderPanel /></div>
          <div className="flex gap-[10px]">
            <History width="w-[745px]" title="체결 내역" more="더 보기" cols={[["시간", 102], ["구분", 119], ["가격 (ETH)", 233], ["수량 (BDSG)", 179], ["주문총액 (ETH)", 90]]} />
            <History width="w-[820px]" title="미체결 내역" cols={[["구분", 100], ["가격 (ETH)", 268], ["거래 금액 / 주문량 (BDSG)", 250], ["주문총액 (ETH)", 142], ["취소", 40]]} />
          </div>
        </div>
        <div className="w-[5px] bg-[#192130] pt-[76px]"><div className="h-[304px] rounded-[2px] bg-[#202845]" /></div>
      </main>
      <Taskbar />
      <div className="absolute left-[1471px] top-[801px] flex h-[46px] w-[103px] items-center rounded-full bg-[#0b1d4c] pl-[21px] font-['Noto_Sans_CJK_KR',sans-serif] text-[16.5px] font-bold leading-none text-white">
        <svg className="mr-[8px]" width="21" height="21" viewBox="0 0 21 21"><path d="M3.5 15.5A8.3 8.3 0 1 1 8 18.8L1.8 19.5Z" fill="none" stroke="#fff" strokeWidth="2.4" strokeLinejoin="round" /></svg>
        채팅
      </div>
      <svg className="pointer-events-none absolute inset-0" width="1600" height="900" fill="none" stroke="#ed1c24" strokeWidth="5">
        <rect x="1054.5" y="244.5" width="530" height="144" rx="15" />
        <path d="M482 423.5H735Q759.5 424 759.5 431V439Q759.5 446 730 446.5H486Q456.5 445 456.5 440V431Q457 424 482 423.5Z" />
      </svg>
    </div>
  );
}
